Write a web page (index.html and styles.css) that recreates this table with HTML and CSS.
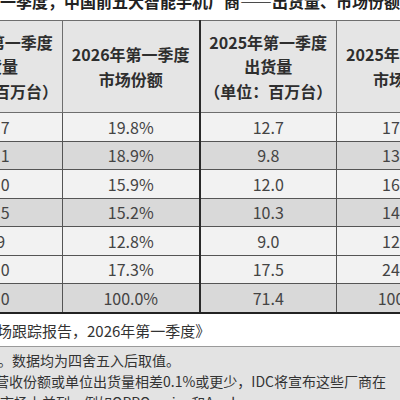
FILE: index.html
```html
<!DOCTYPE html>
<html lang="zh-CN">
    <head>
        <meta charset="UTF-8">
        <meta name="viewport" content="width=device-width, initial-scale=1.0">
        <title>中国前五大智能手机厂商</title>
        <link rel="stylesheet" href="styles.css">
    </head>
    <body>
        <div class="report">
            <div class="report__title">第一季度，中国前五大智能手机厂商——出货量、市场份额、同比增幅</div>

            <table class="shipments">
                <colgroup>
                    <col><col><col><col>
                </colgroup>
                <thead>
                    <tr>
                        <th>2026年第一季度<br>出货量<br>（单位：百万台）</th>
                        <th>2026年第一季度<br>市场份额</th>
                        <th class="split">2025年第一季度<br>出货量<br>（单位：百万台）</th>
                        <th>2025年第一季度<br>市场份额</th>
                    </tr>
                </thead>
                <tbody>
                    <tr class="light">
                        <td>13.7</td><td>19.8%</td><td class="split">12.7</td><td>17.8%</td>
                    </tr>
                    <tr class="dark">
                        <td>13.1</td><td>18.9%</td><td class="split">9.8</td><td>13.7%</td>
                    </tr>
                    <tr class="light">
                        <td>11.0</td><td>15.9%</td><td class="split">12.0</td><td>16.8%</td>
                    </tr>
                    <tr class="dark">
                        <td>10.5</td><td>15.2%</td><td class="split">10.3</td><td>14.4%</td>
                    </tr>
                    <tr class="light">
                        <td>8.9</td><td>12.8%</td><td class="split">9.0</td><td>12.6%</td>
                    </tr>
                    <tr class="light">
                        <td>12.0</td><td>17.3%</td><td class="split">17.5</td><td>24.5%</td>
                    </tr>
                    <tr class="dark total">
                        <td>69.0</td><td>100.0%</td><td class="split">71.4</td><td>100.0%</td>
                    </tr>
                </tbody>
            </table>

            <!-- source line sits on white, the notes on grey -->
            <div class="report__source">场跟踪报告，2026年第一季度》</div>
            <div class="report__notes">
                <p class="note note--first">。数据均为四舍五入后取值。</p>
                <p class="note note--second">营收份额或单位出货量相差0.1%或更少，IDC将宣布这些厂商在</p>
                <p class="note">市场上并列。例如OPPO、vivo和Apple。</p>
            </div>
        </div>
    </body>
</html>
```

FILE: styles.css
```css
body {
    margin: 0;
    width: 400px;
    height: 400px;
    overflow: hidden;
    background: #fff;
    color: #333;
    font-family: "Noto Sans CJK SC", "Noto Sans", sans-serif;
}

.report__title {
    margin: -9px 0 0 -16px;
    font-size: 16px;
    font-weight: bold;
    line-height: 20px;
    white-space: nowrap;
    color: #222;
}

.shipments {
    margin: 9px 0 0 -75px;
    width: 548px;
    border-collapse: collapse;
    table-layout: fixed;
}

.shipments col {
    width: 137px;
}

.shipments th {
    height: 91px;
    padding: 0;
    background: #e5e5e5;
    border: 1px solid #6e6e6e;
    font-size: 16px;
    font-weight: bold;
    line-height: 24.5px;
    color: #2e2e2e;
}

.shipments td {
    height: 27.5px;
    padding: 0;
    border: 1px solid #555;
    text-align: center;
    font-size: 16px;
    color: #444;
}

.shipments .split {
    border-left: 2px solid #2a2a2a;
}

.light td {
    background: #f2f2f2;
}

.dark td {
    background: #d9d9d9;
}

.total td {
    border-bottom: 2px solid #222;
}

.report__source {
    height: 32px;
    margin-left: -3px;
    line-height: 33px;
    font-size: 15px;
    white-space: nowrap;
    border-bottom: 1px solid #9a9a9a;
}

.report__notes {
    padding-top: 3px;
    background: #e3e3e3;
    font-size: 14px;
    line-height: 21px;
    color: #333;
}

.note {
    margin: 0;
    white-space: nowrap;
}

.note--first {
    margin-left: -2px;
}

.note--second {
    margin-left: -5px;
}
```
